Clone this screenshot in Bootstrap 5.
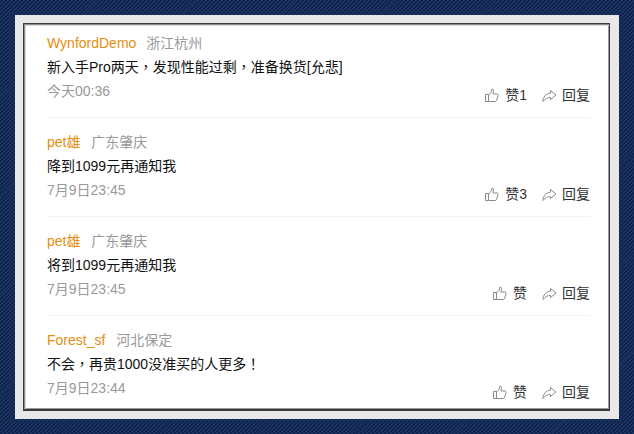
<!DOCTYPE html>
<html lang="zh">
<head>
<meta charset="utf-8">
<title>评论</title>
<link href="https://cdn.jsdelivr.net/npm/bootstrap@5.3.0/dist/css/bootstrap.min.css" rel="stylesheet">
<style>
html,body{height:100%}
body{
  margin:0;width:634px;height:434px;overflow:hidden;padding:15px;
  background-color:#14294f;
  background-image:repeating-linear-gradient(135deg,#1b3464 0 1.4px,#10234a 1.4px 2.8px);
  font-family:"Liberation Sans","Noto Sans CJK SC",sans-serif;font-size:14px;color:#222;
}
.frame-gray{background:#e8e8e8;padding:8px 9px 8px 8px;width:604px;height:404px}
.frame-inner{background:#fff;height:100%;border:1px solid #3a3a3a;border-bottom-width:2px;box-shadow:inset 1px 1px 0 #8c8c8c,inset 2px 2px 0 #dcdcdc,inset -1px -1px 0 #9a9a9a;padding:0 19px 0 23px;overflow:hidden}
.cmt-list{margin-top:-5px}
.cmt{height:99px;padding-top:12px;border-bottom:1px solid #f3f3f3;line-height:24px;position:relative}
.cmt:last-child{border-bottom:0}
.who{color:#e58e10}
.place{color:#999;margin-left:7px}
.place-tight{margin-left:6px}
.said{color:#111;height:24px}
.pun{font-family:"Noto Sans CJK TC",sans-serif;line-height:1}
.when{color:#999}
.acts{color:#333;margin-top:-20px;line-height:24px}
.act{gap:6px}
.act svg{display:block}
.rep{margin-left:15px;gap:5px}
</style>
</head>
<body>
<div class="frame-gray">
<div class="frame-inner">
<div class="cmt-list">

<div class="cmt">
  <div><span class="who">WynfordDemo</span> <span class="place place-tight">浙江杭州</span></div>
  <div class="said">新入手Pro两天<span class="pun" lang="zh-Hant">，</span>发现性能过剩<span class="pun" lang="zh-Hant">，</span>准备换货[允悲]</div>
  <div class="when">今天00:36</div>
  <div class="acts d-flex justify-content-end align-items-center">
    <span class="act d-flex align-items-center"><svg width="15" height="15" viewBox="0 0 15 15" fill="none" stroke="#8a8a8a"><path d="M1.500 6.500h3v7h-3zM4.500 7l2.500-2.500 1-3.500c1.300 0 1.800 1 1.500 2.200L9 6h4c.9 0 1.400.8 1.100 1.600l-1.600 5c-.2.600-.6.900-1.200.9H4.500"/></svg>赞1</span>
    <span class="rep d-flex align-items-center"><svg width="15" height="15" viewBox="0 0 15 15" fill="none" stroke="#8a8a8a"><path d="M8.500 2.500l5.500 4.500-5.500 4.500V9.500C5.500 9.500 3.500 10.500 1 13.500 1 9 4 5.500 8.500 5.200z"/></svg>回复</span>
  </div>
</div>

<div class="cmt">
  <div><span class="who">pet雄</span> <span class="place">广东肇庆</span></div>
  <div class="said">降到1099元再通知我</div>
  <div class="when">7月9日23:45</div>
  <div class="acts d-flex justify-content-end align-items-center">
    <span class="act d-flex align-items-center"><svg width="15" height="15" viewBox="0 0 15 15" fill="none" stroke="#8a8a8a"><path d="M1.500 6.500h3v7h-3zM4.500 7l2.500-2.500 1-3.500c1.300 0 1.800 1 1.500 2.200L9 6h4c.9 0 1.400.8 1.100 1.600l-1.600 5c-.2.600-.6.900-1.200.9H4.500"/></svg>赞3</span>
    <span class="rep d-flex align-items-center"><svg width="15" height="15" viewBox="0 0 15 15" fill="none" stroke="#8a8a8a"><path d="M8.500 2.500l5.500 4.500-5.500 4.500V9.500C5.500 9.500 3.500 10.500 1 13.500 1 9 4 5.500 8.500 5.200z"/></svg>回复</span>
  </div>
</div>

<div class="cmt">
  <div><span class="who">pet雄</span> <span class="place">广东肇庆</span></div>
  <div class="said">将到1099元再通知我</div>
  <div class="when">7月9日23:45</div>
  <div class="acts d-flex justify-content-end align-items-center">
    <span class="act d-flex align-items-center"><svg width="15" height="15" viewBox="0 0 15 15" fill="none" stroke="#8a8a8a"><path d="M1.500 6.500h3v7h-3zM4.500 7l2.500-2.500 1-3.500c1.300 0 1.800 1 1.500 2.200L9 6h4c.9 0 1.400.8 1.100 1.600l-1.600 5c-.2.600-.6.900-1.200.9H4.500"/></svg>赞</span>
    <span class="rep d-flex align-items-center"><svg width="15" height="15" viewBox="0 0 15 15" fill="none" stroke="#8a8a8a"><path d="M8.500 2.500l5.500 4.500-5.500 4.500V9.500C5.500 9.500 3.500 10.500 1 13.500 1 9 4 5.500 8.500 5.200z"/></svg>回复</span>
  </div>
</div>

<div class="cmt">
  <div><span class="who">Forest_sf</span> <span class="place">河北保定</span></div>
  <div class="said">不会<span class="pun" lang="zh-Hant">，</span>再贵1000没准买的人更多<span class="pun" lang="zh-Hant">！</span></div>
  <div class="when">7月9日23:44</div>
  <div class="acts d-flex justify-content-end align-items-center">
    <span class="act d-flex align-items-center"><svg width="15" height="15" viewBox="0 0 15 15" fill="none" stroke="#8a8a8a"><path d="M1.500 6.500h3v7h-3zM4.500 7l2.500-2.500 1-3.500c1.300 0 1.800 1 1.500 2.200L9 6h4c.9 0 1.400.8 1.100 1.600l-1.600 5c-.2.600-.6.900-1.200.9H4.500"/></svg>赞</span>
    <span class="rep d-flex align-items-center"><svg width="15" height="15" viewBox="0 0 15 15" fill="none" stroke="#8a8a8a"><path d="M8.500 2.500l5.500 4.500-5.500 4.500V9.500C5.500 9.500 3.500 10.500 1 13.500 1 9 4 5.500 8.500 5.200z"/></svg>回复</span>
  </div>
</div>

</div>
</div>
</div>
<script src="https://cdn.jsdelivr.net/npm/bootstrap@5.3.0/dist/js/bootstrap.bundle.min.js"></script>
</body>
</html>
